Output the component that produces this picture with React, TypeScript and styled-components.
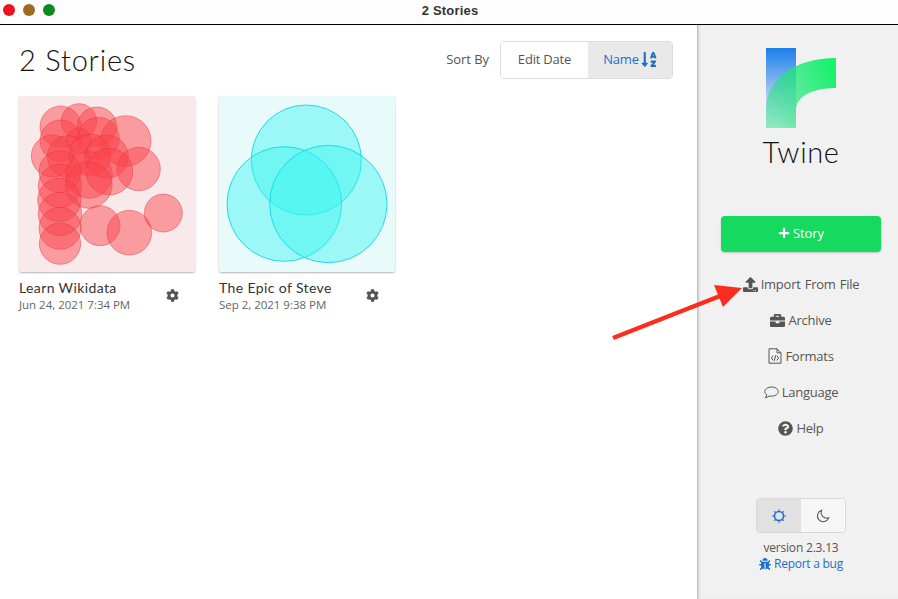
import React from 'react';
import styled, { createGlobalStyle } from 'styled-components';
import {
  FaBriefcase,
  FaBug,
  FaCog,
  FaPlus,
  FaQuestionCircle,
  FaSortAlphaDown,
  FaUpload,
} from 'react-icons/fa';

const GlobalStyle = createGlobalStyle`
  html, body {
    margin: 0;
    height: 100%;
    overflow: hidden;
    background: #fff;
  }
  #root {
    height: 100%;
  }
  * {
    box-sizing: border-box;
  }
`;

const Page = styled.div`
  position: relative;
  display: flex;
  flex-direction: column;
  width: 898px;
  height: 599px;
  font-family: 'Open Sans', 'Liberation Sans', sans-serif;
  color: #555;
`;

const TitleBar = styled.header`
  position: relative;
  display: flex;
  align-items: center;
  justify-content: center;
  flex: 0 0 25px;
  padding: 0 0 4px 2px;
  background: #fdfdfd;
  border-bottom: 1px solid #000;
`;

const WindowButtons = styled.div`
  position: absolute;
  top: 4px;
  left: 3px;
  display: flex;
  gap: 8px;
`;

const WindowButton = styled.span<{ $color: string }>`
  width: 12px;
  height: 12px;
  border-radius: 50%;
  background: ${(p) => p.$color};
`;

const WindowTitle = styled.span`
  font-family: 'Liberation Sans', sans-serif;
  font-size: 13px;
  font-weight: 700;
  letter-spacing: 0.2px;
  color: #333;
`;

const Body = styled.div`
  display: flex;
  flex: 1;
  min-height: 0;
`;

const Main = styled.main`
  flex: 1;
  padding: 16px 24px 0 19px;
`;

const MainHeader = styled.div`
  display: flex;
  align-items: center;
  justify-content: space-between;
  height: 38px;
  margin-bottom: 17px;
`;

const Heading = styled.h1`
  margin: 0 0 2px;
  font-family: Lato, sans-serif;
  font-size: 29px;
  font-weight: 300;
  letter-spacing: 0.8px;
  color: #111;
`;

const SortControls = styled.div`
  display: flex;
  align-items: center;
  gap: 11px;
`;

const SortLabel = styled.span`
  padding-bottom: 2px;
  font-size: 13px;
  letter-spacing: -0.05px;
`;

const Segments = styled.div`
  display: flex;
  height: 38px;
  border: 1px solid #ddd;
  border-radius: 4px;
  overflow: hidden;
`;

const Segment = styled.button<{ $active?: boolean; $width: number }>`
  display: flex;
  align-items: center;
  justify-content: center;
  gap: 2px;
  width: ${(p) => p.$width}px;
  padding: 0 0 2px;
  border: 0;
  font: inherit;
  font-size: 13px;
  letter-spacing: -0.2px;
  color: ${(p) => (p.$active ? '#1c6fc9' : '#555')};
  background: ${(p) => (p.$active ? '#e9e9e9' : '#fff')};

  svg {
    width: 16px;
    height: 17px;
  }
`;

const Cards = styled.div`
  display: flex;
  gap: 24px;
`;

const Card = styled.article`
  width: 176px;
`;

const Thumb = styled.div<{ $bg: string }>`
  width: 176px;
  height: 176px;
  border-radius: 2px;
  background: ${(p) => p.$bg};
  box-shadow: 0 1px 2px rgba(0, 0, 0, 0.3);

  svg {
    display: block;
  }
`;

const CardFooter = styled.div`
  display: flex;
  align-items: center;
  justify-content: space-between;
  padding: 7px 16px 0 0;
`;

const CardName = styled.div`
  font-family: Lato, sans-serif;
  font-size: 14px;
  line-height: 18px;
  letter-spacing: 0.38px;
  color: #333;
`;

const CardDate = styled.div`
  font-size: 11.5px;
  line-height: 15px;
  letter-spacing: -0.02px;
  color: #666;
`;

const Gear = styled(FaCog)`
  width: 13px;
  height: 13px;
  color: #555;
`;

const Sidebar = styled.aside`
  display: flex;
  flex-direction: column;
  align-items: center;
  flex: 0 0 201px;
  padding: 23px 17px 0 24px;
  background: #f1f1f1;
  box-shadow: inset 3px 0 3px -2px rgba(0, 0, 0, 0.3);
`;

const Logo = styled.svg`
  display: block;
  width: 70px;
  height: 80px;
`;

const Brand = styled.div`
  margin-top: 6px;
  font-family: Lato, sans-serif;
  font-size: 29px;
  font-weight: 300;
  line-height: 36px;
  letter-spacing: 0.6px;
  color: #111;
`;

const CreateButton = styled.button`
  display: flex;
  align-items: center;
  justify-content: center;
  gap: 3px;
  width: 160px;
  height: 36px;
  margin-top: 46px;
  padding: 0 0 2px;
  border: 0;
  border-radius: 4px;
  font: inherit;
  font-size: 13px;
  letter-spacing: -0.1px;
  color: #fff;
  background: #16d95f;
  box-shadow: 0 1px 2px rgba(0, 0, 0, 0.2);

  svg {
    width: 12px;
    height: 12px;
  }
`;

const NavList = styled.nav`
  display: flex;
  flex-direction: column;
  align-items: center;
  margin-top: 14px;
`;

const NavItem = styled.div<{ $wide?: boolean }>`
  display: flex;
  align-items: center;
  justify-content: center;
  gap: 3px;
  height: 36px;
  font-size: 13px;
  letter-spacing: -0.25px;
  word-spacing: ${(p) => (p.$wide ? '1px' : '0')};
  color: #555;

  svg {
    width: 15px;
    height: 15px;
  }
`;

const FileIcon = styled.svg`
  && {
    width: 14px;
    height: 16px;
  }
`;

const Spacer = styled.div`
  flex: 1;
`;

const ThemeToggle = styled.div`
  display: flex;
  width: 90px;
  height: 35px;
  border: 1px solid #d9d9d9;
  border-radius: 4px;
  overflow: hidden;
`;

const ThemeButton = styled.div<{ $active?: boolean }>`
  display: flex;
  flex: 1;
  align-items: center;
  justify-content: center;
  color: ${(p) => (p.$active ? '#1c6fc9' : '#555')};
  background: ${(p) => (p.$active ? '#e1e1e1' : '#f6f6f6')};

  svg {
    width: 14px;
    height: 14px;
  }
`;

const Version = styled.div`
  margin-top: 7px;
  font-size: 12px;
  line-height: 16px;
  letter-spacing: -0.2px;
  color: #555;
`;

const BugLink = styled.div`
  display: flex;
  align-items: center;
  gap: 3px;
  margin-bottom: 27px;
  font-size: 12px;
  line-height: 16px;
  letter-spacing: -0.25px;
  color: #1c6fc9;

  svg {
    width: 12px;
    height: 12px;
  }
`;

const Arrow = styled.svg`
  position: absolute;
  top: 275px;
  left: 605px;
  width: 140px;
  height: 70px;
`;

const redCircles = [
  [152, 110, 62],
  [207, 94, 53],
  [261, 110, 59],
  [152, 152, 62],
  [265, 145, 63],
  [347, 153, 76],
  [207, 152, 38],
  [127, 198, 63],
  [175, 200, 63],
  [240, 195, 63],
  [290, 200, 65],
  [386, 237, 65],
  [150, 245, 63],
  [237, 255, 70],
  [298, 245, 70],
  [150, 288, 65],
  [236, 285, 70],
  [148, 330, 65],
  [150, 372, 65],
  [270, 407, 60],
  [358, 428, 67],
  [460, 369, 57],
  [150, 415, 63],
  [150, 461, 62],
];

const tealCircles = [
  [289, 210, 165],
  [223, 342, 172],
  [355, 342, 176],
];

function Thumbnail({ circles, fill, stroke }: { circles: number[][]; fill: string; stroke: string }) {
  return (
    <svg width="176" height="176" viewBox="27 18 528 528">
      {circles.map(([cx, cy, r], i) => (
        <circle key={i} cx={cx} cy={cy} r={r} fill={fill} stroke={stroke} strokeWidth="3" />
      ))}
    </svg>
  );
}

function SunIcon() {
  return (
    <svg viewBox="0 0 16 16" fill="none" stroke="currentColor" strokeWidth="1.8">
      <circle cx="8" cy="8" r="5.2" />
      <path
        strokeWidth="1.5"
        strokeLinecap="round"
        d="M8 1v.4M8 14.6v.4M1 8h.4M14.6 8h.4M3 3l.4.4M12.6 12.6l.4.4M3 13l.4-.4M12.6 3.4l.4-.4"
      />
    </svg>
  );
}

function MoonIcon() {
  return (
    <svg viewBox="0 0 16 16" fill="none" stroke="currentColor" strokeWidth="1.2">
      <path d="M6.5 1.5a6.6 6.6 0 1 0 8 8.6A6.4 6.4 0 0 1 6.5 1.5Z" />
    </svg>
  );
}

function FormatsIcon() {
  return (
    <FileIcon viewBox="0 0 14 16" fill="none" stroke="currentColor" strokeWidth="1">
      <path d="M1 .8h8l4 4v10.4H1Z" />
      <path d="M9 .8v4h4" />
      <path d="M5.2 7.6 3.4 10l1.8 2.4M8.8 7.6l1.8 2.4-1.8 2.4M7.7 7.2 6.3 12.8" />
    </FileIcon>
  );
}

function CommentIcon() {
  return (
    <svg viewBox="0 0 15 13" fill="none" stroke="currentColor" strokeWidth="1">
      <path d="M7.5 1C3.8 1 .8 3 .8 5.6c0 1.3.8 2.4 2 3.2-.2 1-.7 2-1.4 2.9 1.5-.1 2.9-.9 3.8-1.7.7.1 1.5.2 2.3.2 3.7 0 6.7-2 6.7-4.6S11.2 1 7.5 1Z" />
    </svg>
  );
}

const stories = [
  {
    name: 'Learn Wikidata',
    date: 'Jun 24, 2021 7:34 PM',
    bg: '#f8eaea',
    circles: redCircles,
    fill: 'rgba(250, 65, 75, 0.47)',
    stroke: 'rgba(230, 50, 60, 0.45)',
  },
  {
    name: 'The Epic of Steve',
    date: 'Sep 2, 2021 9:38 PM',
    bg: '#e9fafa',
    circles: tealCircles,
    fill: 'rgba(55, 245, 240, 0.43)',
    stroke: 'rgba(20, 215, 225, 0.9)',
  },
];

const navItems = [
  { label: 'Import From File', icon: <FaUpload />, wide: true },
  { label: 'Archive', icon: <FaBriefcase /> },
  { label: 'Formats', icon: <FormatsIcon /> },
  { label: 'Language', icon: <CommentIcon /> },
  { label: 'Help', icon: <FaQuestionCircle /> },
];

export default function App() {
  return (
    <Page>
      <GlobalStyle />
      <TitleBar>
        <WindowButtons>
          <WindowButton $color="#ee1122" />
          <WindowButton $color="#a06a20" />
          <WindowButton $color="#0b8a22" />
        </WindowButtons>
        <WindowTitle>2 Stories</WindowTitle>
      </TitleBar>
      <Body>
        <Main>
          <MainHeader>
            <Heading>2 Stories</Heading>
            <SortControls>
              <SortLabel>Sort By</SortLabel>
              <Segments>
                <Segment $width={87}>Edit Date</Segment>
                <Segment $width={84} $active>
                  Name <FaSortAlphaDown />
                </Segment>
              </Segments>
            </SortControls>
          </MainHeader>
          <Cards>
            {stories.map((s) => (
              <Card key={s.name}>
                <Thumb $bg={s.bg}>
                  <Thumbnail circles={s.circles} fill={s.fill} stroke={s.stroke} />
                </Thumb>
                <CardFooter>
                  <div>
                    <CardName>{s.name}</CardName>
                    <CardDate>{s.date}</CardDate>
                  </div>
                  <Gear />
                </CardFooter>
              </Card>
            ))}
          </Cards>
        </Main>
        <Sidebar>
          <Logo viewBox="0 0 70 80">
            <defs>
              <linearGradient id="logoBlue" x1="0" y1="0" x2="0" y2="1">
                <stop offset="0" stopColor="#1a7fea" />
                <stop offset="0.57" stopColor="#1a7fea" stopOpacity="0.35" />
                <stop offset="1" stopColor="#1a7fea" stopOpacity="0" />
              </linearGradient>
              <linearGradient id="logoGreen" x1="1" y1="0.25" x2="0" y2="0.75">
                <stop offset="0" stopColor="#18f26c" />
                <stop offset="1" stopColor="#1ce080" stopOpacity="0.45" />
              </linearGradient>
            </defs>
            <rect x="0" y="0" width="30" height="80" fill="url(#logoBlue)" />
            <path d="M0 80V62C0 30 30 10 70 10V40C44 40 30 50 30 62V80Z" fill="url(#logoGreen)" />
          </Logo>
          <Brand>Twine</Brand>
          <CreateButton>
            <FaPlus /> Story
          </CreateButton>
          <NavList>
            {navItems.map((item) => (
              <NavItem key={item.label} $wide={item.wide}>
                {item.icon}
                {item.label}
              </NavItem>
            ))}
          </NavList>
          <Spacer />
          <ThemeToggle>
            <ThemeButton $active>
              <SunIcon />
            </ThemeButton>
            <ThemeButton>
              <MoonIcon />
            </ThemeButton>
          </ThemeToggle>
          <Version>version 2.3.13</Version>
          <BugLink>
            <FaBug /> Report a bug
          </BugLink>
        </Sidebar>
      </Body>
      <Arrow viewBox="0 0 140 70">
        <path d="M8 63L115 21" stroke="#fb2d1e" strokeWidth="4.5" fill="none" />
        <path d="M137 13L109 10L118 32Z" fill="#fb2d1e" />
      </Arrow>
    </Page>
  );
}
